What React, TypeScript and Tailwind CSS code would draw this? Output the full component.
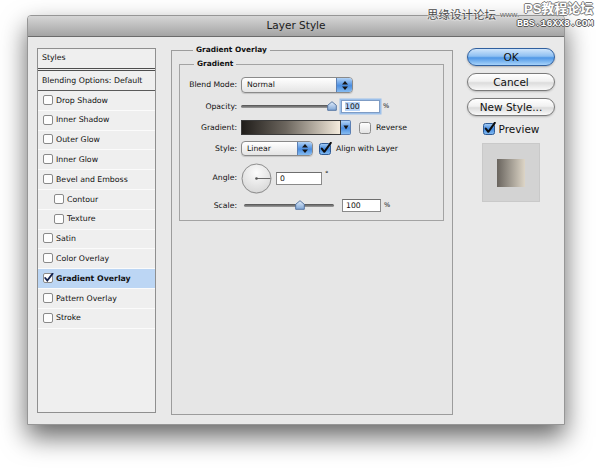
import { useId } from "react"

const items = [
  { label: "Drop Shadow" },
  { label: "Inner Shadow" },
  { label: "Outer Glow" },
  { label: "Inner Glow" },
  { label: "Bevel and Emboss" },
  { label: "Contour", sub: true },
  { label: "Texture", sub: true },
  { label: "Satin" },
  { label: "Color Overlay" },
  { label: "Gradient Overlay", checked: true },
  { label: "Pattern Overlay" },
  { label: "Stroke" },
]

function SmallBox({ checked }: { checked?: boolean }) {
  return (
    <svg width="11" height="11" viewBox="0 0 11 11" className="shrink-0">
      <rect x="0.5" y="0.5" width="9" height="9" rx="1.5" fill="#fdfdfd" stroke="#8a8a8a" />
      {checked && <path d="M2.2 5 L4.3 7.6 L9.6 0.6" fill="none" stroke="#15234f" strokeWidth="1.8" strokeLinecap="round" />}
    </svg>
  )
}

function AquaCheck({ checked }: { checked?: boolean }) {
  const id = useId()
  if (!checked)
    return (
      <svg width="12" height="12" viewBox="0 0 12 12" className="shrink-0">
        <defs>
          <linearGradient id={id} x1="0" y1="0" x2="0" y2="1">
            <stop offset="0" stopColor="#ffffff" />
            <stop offset="1" stopColor="#e2e2e2" />
          </linearGradient>
        </defs>
        <rect x="0.5" y="0.5" width="11" height="11" rx="2" fill={`url(#${id})`} stroke="#8c8c8c" />
      </svg>
    )
  return (
    <svg width="13" height="13" viewBox="0 0 13 13" className="shrink-0">
      <defs>
        <linearGradient id={id} x1="0" y1="0" x2="0" y2="1">
          <stop offset="0" stopColor="#a9cff5" />
          <stop offset="0.5" stopColor="#4289df" />
          <stop offset="1" stopColor="#86bdf2" />
        </linearGradient>
      </defs>
      <rect x="0.5" y="1.5" width="11" height="11" rx="2" fill={`url(#${id})`} stroke="#2f5a94" />
      <path d="M2.8 6.6 L5.3 9.8 L11.8 0.8" fill="none" stroke="#0d0d0d" strokeWidth="2" strokeLinecap="round" strokeLinejoin="round" />
    </svg>
  )
}

function UpDown() {
  return (
    <svg width="8" height="11" viewBox="0 0 8 11">
      <path d="M4 1 L7 4.5 H1 Z" fill="#151515" />
      <path d="M4 10 L7 6.5 H1 Z" fill="#151515" />
    </svg>
  )
}

function Thumb() {
  const id = useId()
  return (
    <svg width="10" height="10" viewBox="0 0 10 10">
      <defs>
        <linearGradient id={id} x1="0" y1="0" x2="0" y2="1">
          <stop offset="0" stopColor="#e3eefb" />
          <stop offset="1" stopColor="#7fa6d6" />
        </linearGradient>
      </defs>
      <path d="M5 0.7 L9.3 4.3 V9.3 H0.7 V4.3 Z" fill={`url(#${id})`} stroke="#4b6c9b" strokeWidth="0.9" strokeLinejoin="round" />
    </svg>
  )
}

function Dial() {
  const id = useId()
  return (
    <svg width="31" height="31" viewBox="0 0 31 31">
      <defs>
        <radialGradient id={id} cx="0.5" cy="0.3" r="0.7">
          <stop offset="0" stopColor="#fcfcfc" />
          <stop offset="1" stopColor="#d8d8d8" />
        </radialGradient>
      </defs>
      <circle cx="15.5" cy="16" r="14.5" fill="rgba(0,0,0,0.12)" />
      <circle cx="15.5" cy="15.5" r="14.5" fill={`url(#${id})`} stroke="#8e8e8e" />
      <line x1="15.5" y1="15.5" x2="29.5" y2="15.5" stroke="#6a6a6a" strokeWidth="1" />
      <circle cx="15.5" cy="15.5" r="1.3" fill="#555" />
    </svg>
  )
}

function Label({ children }: { children: string }) {
  return <span className="w-[57px] mr-[4px] text-right shrink-0">{children}</span>
}

function Field({ children, focused }: { children: string; focused?: boolean }) {
  return (
    <div
      className={
        focused
          ? "w-[39px] h-[13px] border border-[#7f9cc4] bg-white pl-[3px] leading-[11px] shadow-[0_0_0_1.5px_#9cc0ea]"
          : "w-[39px] h-[13px] border border-[#8a8a8a] border-t-[#6e6e6e] bg-white pl-[3px] leading-[11px]"
      }
    >
      <span className={focused ? "bg-[#b7d4f8]" : ""}>{children}</span>
    </div>
  )
}

export default function App() {
  return (
    <div className="relative w-[600px] h-[469px] overflow-hidden bg-white font-['DejaVu_Sans',sans-serif] text-[#111]">
      <div className="ml-[27px] mt-[15px] w-[538px] h-[410px] flex flex-col border border-[#969696] rounded-t-[4px] bg-[#e9e9e9] shadow-[0_12px_26px_rgba(0,0,0,0.6)]">
        <div className="h-[21px] shrink-0 flex items-center justify-center rounded-t-[3px] border-b border-[#6b6b6b] bg-[linear-gradient(#d6d6d6,#a4a4a4)] text-[10.5px] text-[#1b1b1b]">
          Layer Style
        </div>

        <div className="flex items-start pt-[8px] pl-[9px]">
          {/* styles list */}
          <div className="mt-[3px] w-[119px] h-[365px] border border-[#8f8f8f] bg-[#efefef] text-[7.8px]">
            <div className="h-[22px] flex items-center pl-[4px] pb-[2px] border-b-[3px] border-double border-[#4d4d4d]">Styles</div>
            <div className="h-[20px] flex items-center pl-[4px] border-b border-[#5a5a5a]">Blending Options: Default</div>
            {items.map((item) => (
              <div
                key={item.label}
                className={clsx(
                  "h-[19.8px] flex items-center gap-[2px] border-b border-[#fbfbfb]",
                  item.sub ? "pl-[16px]" : "pl-[5px]",
                  item.checked && "bg-[#bcd6f4] font-bold"
                )}
              >
                <SmallBox checked={item.checked} />
                <span>{item.label}</span>
              </div>
            ))}
          </div>

          {/* gradient overlay panel */}
          <fieldset className="ml-[15px] w-[282px] h-[370px] border border-[#9c9c9c] bg-[#e6e6e6] pl-[7px] pt-[4px]">
            <legend className="ml-[14px] px-[3px] text-[7.4px] leading-[10px] font-bold">Gradient Overlay</legend>
            <fieldset className="w-[265px] border border-[#a3a3a3] pt-[8px] pb-[8px] text-[7.7px]">
              <legend className="ml-[14px] px-[3px] text-[7.4px] leading-[10px] font-bold">Gradient</legend>

              <div className="flex items-center h-[16px]">
                <Label>Blend Mode:</Label>
                <div className="flex w-[112px] h-[16px] rounded-[4px] border border-[#8a8a8a] overflow-hidden bg-[linear-gradient(#ffffff,#e4e4e4)] shadow-[0_1px_1px_rgba(0,0,0,0.15)]">
                  <span className="flex-1 pl-[5px] leading-[14px]">Normal</span>
                  <span className="w-[16px] flex items-center justify-center border-l border-[#5b7fb3] bg-[linear-gradient(#b2d3f6,#4a8de0_55%,#86bcf1)]">
                    <UpDown />
                  </span>
                </div>
              </div>

              <div className="flex items-center h-[13px] mt-[7px]">
                <Label>Opacity:</Label>
                <div className="relative w-[93px] h-[10px] flex items-center">
                  <div className="w-full h-[3px] rounded-full bg-[linear-gradient(#4f4f4f,#a0a0a0)]" />
                  <div className="absolute left-[86px] top-[-1px]">
                    <Thumb />
                  </div>
                </div>
                <div className="ml-[7px]">
                  <Field focused>100</Field>
                </div>
                <span className="ml-[3px] text-[6.5px]">%</span>
              </div>

              <div className="flex items-center h-[15px] mt-[7px]">
                <Label>Gradient:</Label>
                <div className="flex h-[15px]">
                  <div className="w-[100px] border border-[#3a3a3a] bg-[linear-gradient(90deg,#201d1a,#6c665e_45%,#f4ebdc)]" />
                  <span className="w-[10px] flex items-center justify-center rounded-r-[2px] border border-l-0 border-[#5b7fb3] bg-[linear-gradient(#b2d3f6,#4a8de0_55%,#86bcf1)]">
                    <svg width="6" height="5" viewBox="0 0 6 5">
                      <path d="M0.5 0.5 H5.5 L3 4.5 Z" fill="#151515" />
                    </svg>
                  </span>
                </div>
                <div className="ml-[8px] flex items-center gap-[5px]">
                  <AquaCheck />
                  <span>Reverse</span>
                </div>
              </div>

              <div className="flex items-center h-[15px] mt-[6px]">
                <Label>Style:</Label>
                <div className="flex w-[72px] h-[15px] rounded-[4px] border border-[#8a8a8a] overflow-hidden bg-[linear-gradient(#ffffff,#e4e4e4)] shadow-[0_1px_1px_rgba(0,0,0,0.15)]">
                  <span className="flex-1 pl-[5px] leading-[13px]">Linear</span>
                  <span className="w-[15px] flex items-center justify-center border-l border-[#5b7fb3] bg-[linear-gradient(#b2d3f6,#4a8de0_55%,#86bcf1)]">
                    <UpDown />
                  </span>
                </div>
                <div className="ml-[6px] flex items-center gap-[4px]">
                  <AquaCheck checked />
                  <span>Align with Layer</span>
                </div>
              </div>

              <div className="flex items-center h-[30px] mt-[7px]">
                <Label>Angle:</Label>
                <Dial />
                <div className="ml-[4px] w-[46px] h-[13px] border border-[#8a8a8a] border-t-[#6e6e6e] bg-white pl-[3px] leading-[11px]">0</div>
                <span className="ml-[3px] self-start mt-[8px] text-[7px] leading-[7px]">°</span>
              </div>

              <div className="flex items-center h-[13px] mt-[6px]">
                <Label>Scale:</Label>
                <div className="relative ml-[3px] w-[90px] h-[10px] flex items-center">
                  <div className="w-full h-[3px] rounded-full bg-[linear-gradient(#4f4f4f,#a0a0a0)]" />
                  <div className="absolute left-[51px] top-[-1px]">
                    <Thumb />
                  </div>
                </div>
                <div className="ml-[8px]">
                  <Field>100</Field>
                </div>
                <span className="ml-[3px] text-[6.5px]">%</span>
              </div>
            </fieldset>
          </fieldset>

          {/* buttons */}
          <div className="mt-[3px] ml-[14px] w-[88px] flex flex-col items-center text-[10.5px]">
            <button className="w-[88px] h-[18px] rounded-full border border-[#30609f] bg-[linear-gradient(#cfe5fb,#8fc0f2_45%,#4f97e6_55%,#a7d3fa)] leading-[16px] shadow-[0_1px_2px_rgba(0,0,0,0.25)]">
              OK
            </button>
            <button className="mt-[7px] w-[88px] h-[18px] rounded-full border border-[#7a7a7a] bg-[linear-gradient(#ffffff,#f1f1f1_45%,#dcdcdc_55%,#f9f9f9)] leading-[16px] shadow-[0_1px_2px_rgba(0,0,0,0.2)]">
              Cancel
            </button>
            <button className="mt-[7px] w-[88px] h-[18px] rounded-full border border-[#7a7a7a] bg-[linear-gradient(#ffffff,#f1f1f1_45%,#dcdcdc_55%,#f9f9f9)] leading-[16px] shadow-[0_1px_2px_rgba(0,0,0,0.2)]">
              New Style...
            </button>
            <div className="mt-[6px] h-[13px] flex items-center gap-[3px]">
              <AquaCheck checked />
              <span className="leading-[12px]">Preview</span>
            </div>
            <div className="mt-[8px] w-[58px] h-[59px] flex items-center justify-center border border-[#c9c9c9] bg-[#d3d3d3]">
              <div className="w-[28px] h-[28px] bg-[linear-gradient(90deg,#69645e,#a39d93_50%,#ddd5c6)]" />
            </div>
          </div>
        </div>
      </div>

      {/* forum watermark */}
      <span className="absolute left-[427px] top-[6px] whitespace-nowrap text-[11.5px] leading-[16px] text-[#4a4a4a] font-['Noto_Sans_CJK_SC',sans-serif] [text-shadow:0_0_2px_#fff,0_0_2px_#fff]">
        思缘设计论坛
      </span>
      <span className="absolute left-[500px] top-[10px] whitespace-nowrap text-[8px] leading-[10px] text-[#666] font-['Liberation_Sans',sans-serif] [text-shadow:0_0_2px_#fff]">
        www.
      </span>
      <span className="absolute left-[524px] top-[1px] whitespace-nowrap text-[13px] leading-[16px] text-white font-bold font-['Liberation_Sans','Noto_Sans_CJK_SC',sans-serif] [text-shadow:1px_0_#7a7a7a,-1px_0_#7a7a7a,0_1px_#7a7a7a,0_-1px_#7a7a7a]">
        PS教程论坛
      </span>
      <span className="absolute left-[517px] top-[18px] whitespace-nowrap text-[9.8px] leading-[12px] text-white font-bold font-['Liberation_Mono',monospace] [text-shadow:1px_0_#555,-1px_0_#555,0_1px_#555,0_-1px_#555]">
        BBS.16XX8.COM
      </span>
    </div>
  )
}

function clsx(...parts: (string | false | undefined)[]) {
  return parts.filter(Boolean).join(" ")
}
